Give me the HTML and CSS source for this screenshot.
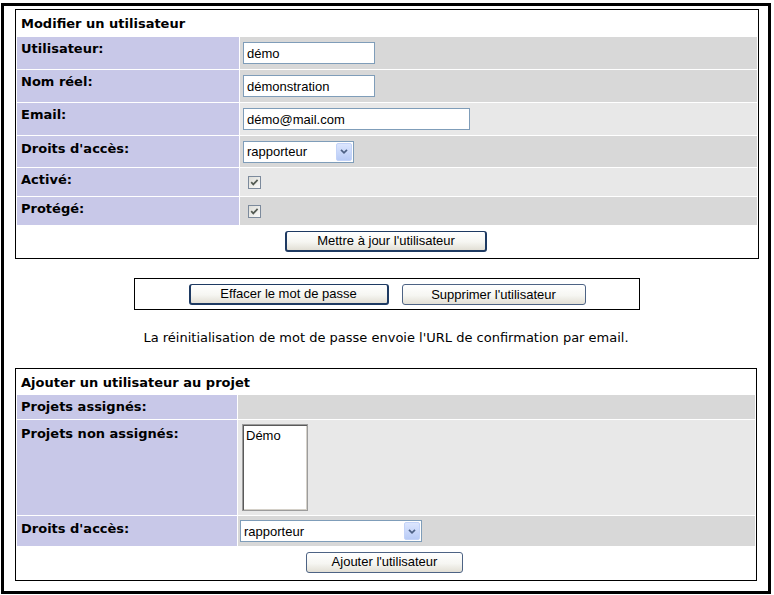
FILE: index.html
```html
<!DOCTYPE html>
<html lang="fr">
<head>
<meta charset="utf-8">
<title>Modifier un utilisateur</title>
<link rel="stylesheet" href="styles.css">
</head>
<body>
<div class="frame">
  <table class="form edit">
    <tr class="h25"><td colspan="2" class="title">Modifier un utilisateur</td></tr>
    <tr class="h32"><td class="cat w1">Utilisateur:</td><td class="val dark"><input class="txt w132" type="text" value="démo"></td></tr>
    <tr class="h32"><td class="cat w1">Nom réel:</td><td class="val dark"><input class="txt w132" type="text" value="démonstration"></td></tr>
    <tr class="h32"><td class="cat w1">Email:</td><td class="val light"><input class="txt w227" type="text" value="démo@mail.com"></td></tr>
    <tr class="h31"><td class="cat w1 p5">Droits d'accès:</td><td class="val dark">
      <div class="select s110"><span>rapporteur</span><span class="arrow"><svg width="8" height="5" viewBox="0 0 8 5"><path d="M1 0.8 L4 3.8 L7 0.8" fill="none" stroke="#4d6185" stroke-width="1.7"/></svg></span></div>
    </td></tr>
    <tr class="h28"><td class="cat w1 p4">Activé:</td><td class="val light">
      <svg class="chk" width="13" height="13" viewBox="0 0 13 13"><defs><linearGradient id="cg" x1="0" y1="0" x2="1" y2="1"><stop offset="0" stop-color="#dcdcd6"/><stop offset="1" stop-color="#fbfbfb"/></linearGradient></defs><rect x="0.5" y="0.5" width="12" height="12" fill="url(#cg)" stroke="#7c8a9c"/><path d="M3.2 6.2 L5.3 8.4 L9.6 3.9" fill="none" stroke="#535b53" stroke-width="1.7"/></svg>
    </td></tr>
    <tr class="h28"><td class="cat w1 p4">Protégé:</td><td class="val dark">
      <svg class="chk" width="13" height="13" viewBox="0 0 13 13"><rect x="0.5" y="0.5" width="12" height="12" fill="url(#cg)" stroke="#7c8a9c"/><path d="M3.2 6.2 L5.3 8.4 L9.6 3.9" fill="none" stroke="#535b53" stroke-width="1.7"/></svg>
    </td></tr>
    <tr class="h31"><td colspan="2" class="center"><button class="btn default b202" type="button">Mettre à jour l'utilisateur</button></td></tr>
  </table>

  <div class="actions">
    <button class="btn default b200" type="button">Effacer le mot de passe</button>
    <button class="btn b184" type="button">Supprimer l'utilisateur</button>
  </div>

  <p class="note">La réinitialisation de mot de passe envoie l'URL de confirmation par email.</p>

  <table class="form add">
    <tr class="h24"><td colspan="2" class="title">Ajouter un utilisateur au projet</td></tr>
    <tr class="h24"><td class="cat w3 p4">Projets assignés:</td><td class="val dark"></td></tr>
    <tr class="h95"><td class="cat w3 p6">Projets non assignés:</td><td class="val light"><div class="listbox">Démo</div></td></tr>
    <tr class="h30"><td class="cat w3 p5">Droits d'accès:</td><td class="val dark">
      <div class="select s182"><span>rapporteur</span><span class="arrow"><svg width="8" height="5" viewBox="0 0 8 5"><path d="M1 0.8 L4 3.8 L7 0.8" fill="none" stroke="#4d6185" stroke-width="1.7"/></svg></span></div>
    </td></tr>
    <tr class="h32"><td colspan="2" class="center"><button class="btn b157" type="button">Ajouter l'utilisateur</button></td></tr>
  </table>
</div>
</body>
</html>
```

FILE: styles.css
```css
body {
  margin: 0;
  background: #fff;
  color: #000;
  font-family: "DejaVu Sans", Verdana, sans-serif;
  font-size: 13px;
}

.frame {
  margin: 3px 0 0 1px;
  width: 764px;
  height: 585px;
  border: 3px solid #000;
  overflow: hidden;
}

table.form {
  border: 1px solid #000;
  border-spacing: 1px;
  margin-left: 11px;
  background: #fff;
}

table.edit {
  width: 744px;
  margin-top: 3px;
}

table.add {
  width: 742px;
  margin-top: 22px;
}

td {
  padding: 0;
}

.h24 { height: 24px; }
.h25 { height: 25px; }
.h28 { height: 28px; }
.h30 { height: 30px; }
.h31 { height: 31px; }
.h32 { height: 32px; }
.h95 { height: 95px; }

.title {
  font-weight: bold;
  padding: 1px 0 0 4px;
  vertical-align: middle;
  line-height: 16px;
}

.cat {
  background: #c8c8e8;
  font-weight: bold;
  vertical-align: top;
  padding: 4px 0 0 4px;
  line-height: 16px;
}

.w1 { width: 218px; }
.w3 { width: 216px; }
.p4 { padding-top: 4px; }
.p5 { padding-top: 5px; }
.p6 { padding-top: 6px; }

.val {
  vertical-align: middle;
  padding: 0 0 0 3px;
}

.add .val {
  padding-left: 2px;
}

.dark { background: #d8d8d8; }
.light { background: #e8e8e8; }

.center {
  background: #fff;
  vertical-align: middle;
}

.txt {
  display: block;
  box-sizing: border-box;
  height: 22px;
  margin: 0;
  padding: 0 3px;
  border: 1px solid #7f9db9;
  background: #fff;
  color: #000;
  font: 13px "Liberation Sans", Arial, sans-serif;
  outline: none;
}

.w132 { width: 132px; }
.w227 { width: 227px; }

.select {
  display: flex;
  align-items: center;
  justify-content: space-between;
  box-sizing: border-box;
  height: 22px;
  padding-left: 3px;
  border: 1px solid #7f9db9;
  background: #fff;
  font: 13px "Liberation Sans", Arial, sans-serif;
}

.s110 { width: 111px; }
.s182 { width: 182px; }

.arrow {
  display: flex;
  align-items: center;
  justify-content: center;
  box-sizing: border-box;
  width: 16px;
  height: 18px;
  margin-right: 1px;
  border: 1px solid #c3d3f8;
  border-radius: 2px;
  background: linear-gradient(#dce6fe, #b8cbf6);
}

.chk {
  display: block;
  margin-left: 5px;
}

.listbox {
  box-sizing: border-box;
  width: 66px;
  height: 87px;
  margin-left: 2px;
  padding: 3px 0 0 3px;
  border: 1px solid #9c9c9c;
  box-shadow: inset 1px 1px 0 #5a5a5a, inset -1px -1px 0 #d4d0c8;
  background: #fff;
  font: 13px "Liberation Sans", Arial, sans-serif;
  line-height: 16px;
}

.btn {
  display: block;
  box-sizing: border-box;
  height: 21px;
  margin: 0 auto;
  padding: 0;
  border: 1px solid #4d6384;
  border-radius: 3px;
  background: linear-gradient(#ffffff, #f6f6f2 55%, #e2dfd5);
  color: #000;
  font: 13px "Liberation Sans", Arial, sans-serif;
  line-height: 18px;
}

.btn.default {
  border: 2px solid #1e3a62;
  border-top-width: 1px;
  border-bottom-width: 2px;
}

.b157 { width: 157px; }
.b184 { width: 184px; }
.b200 { width: 200px; }
.b202 { width: 202px; }

.add .btn.b157 {
  margin: -2px 0 0 289px;
}

.edit .btn.b202 {
  margin: 0 0 0 268px;
}

.actions {
  display: flex;
  justify-content: center;
  gap: 13px;
  box-sizing: border-box;
  width: 506px;
  height: 32px;
  margin: 19px 0 0 130px;
  padding-top: 5px;
  border: 1px solid #000;
}

.actions .btn {
  margin: 0;
}

.note {
  margin: 20px 0 0;
  line-height: 16px;
  text-align: center;
}
```
